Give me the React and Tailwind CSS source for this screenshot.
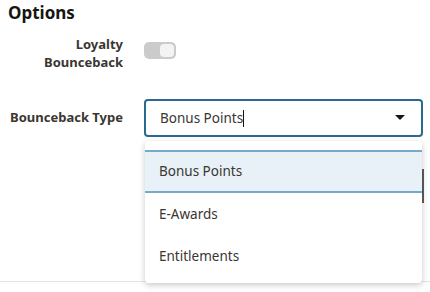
import React from "react";

export default function App() {
  const font = { fontFamily: '"Noto Sans", "Open Sans", Arial, sans-serif' };
  return (
    <div className="relative w-[430px] h-[292px] bg-white overflow-hidden text-[#161513]" style={font}>
      <div className="h-[282px] border-b border-[#e4e4e4]">
        <h2 className="pl-[8px] pt-[1px] text-[17px] font-bold leading-[24px]">Options</h2>
        <div className="flex items-start mt-[10px]">
          <div className="w-[123px] text-right text-[13px] font-bold leading-[18px] text-[#3a3631]">
            Loyalty<br />Bounceback
          </div>
          <div className="ml-[21px] mt-[7px] w-[32px] h-[17px] rounded-[5px] bg-[#cbcbcb] flex justify-end items-center p-[2px]">
            <div className="w-[14px] h-[13px] rounded-[4px] bg-[#f3f3f3]" />
          </div>
        </div>
        <div className="flex items-center mt-[28px]">
          <div className="w-[123px] text-right text-[13px] font-bold text-[#3a3631]">Bounceback Type</div>
          <div className="ml-[21px] w-[279px] h-[38px] rounded-[4px] border-2 border-[#2a6a8f] flex items-center pl-[14px] pr-[16px]">
            <span className="text-[13.5px] text-[#3a3631]">Bonus Points</span>
            <span className="w-px h-[17px] bg-[#161513]" />
            <span className="flex-1" />
            <svg width="10" height="6" viewBox="0 0 10 6"><path d="M0 0 L10 0 L5 5 Z" fill="#161513" /></svg>
          </div>
        </div>
      </div>
      <div className="absolute left-[145px] top-[141px] w-[277px] h-[142px] bg-white rounded-[4px] shadow-[0_2px_6px_rgba(0,0,0,0.22)] pt-[9px]">
        <div className="h-[43px] bg-[#e7f1f7] border-y-2 border-[#76aac6] flex items-center pl-[14px] text-[13.5px] text-[#3a3631]">Bonus Points</div>
        <div className="h-[42px] flex items-center pl-[14px] text-[13.5px] text-[#3a3631]">E-Awards</div>
        <div className="h-[42px] flex items-center pl-[14px] text-[13.5px] text-[#3a3631]">Entitlements</div>
        <div className="absolute right-[-2px] top-[28px] w-[2px] h-[34px] bg-[#555]" />
      </div>
    </div>
  );
}
